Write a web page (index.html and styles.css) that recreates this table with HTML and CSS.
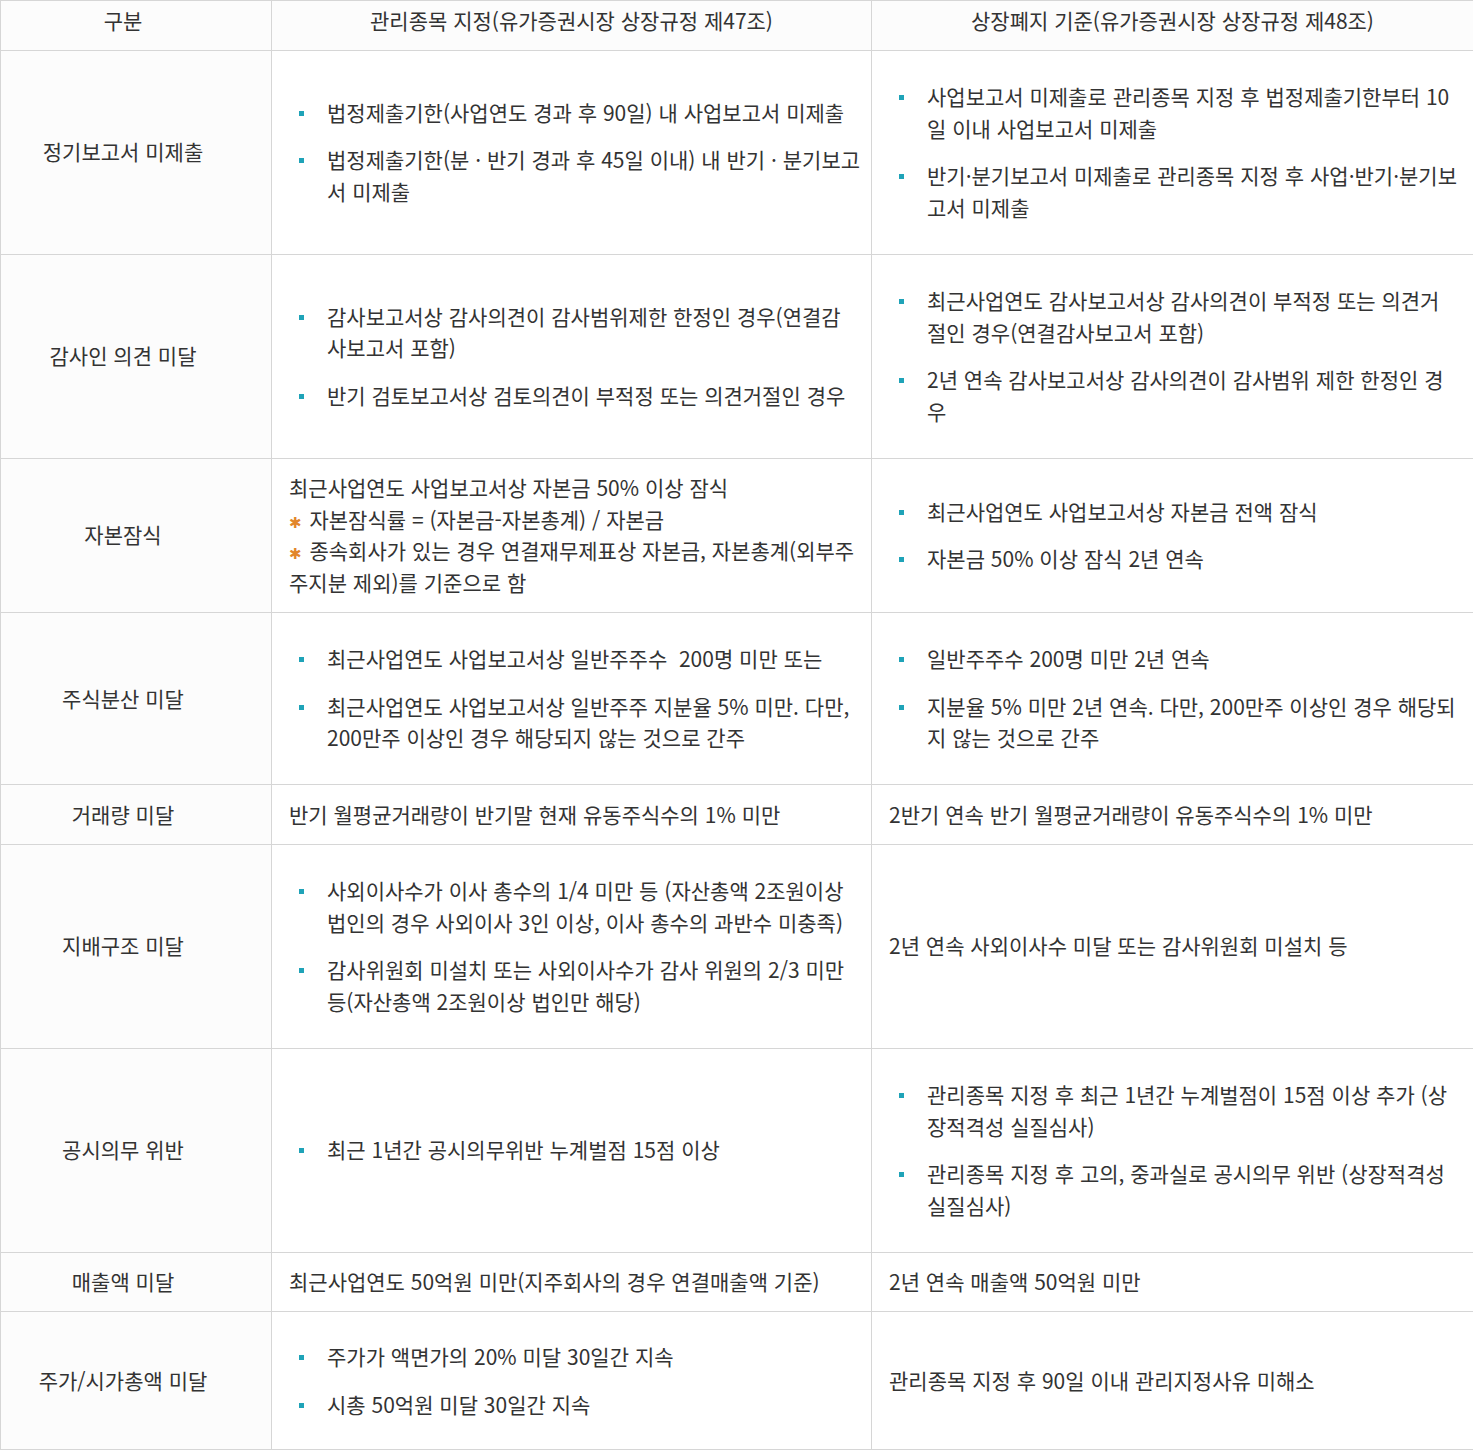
FILE: index.html
```html
<!DOCTYPE html>
<html lang="ko">
<head>
<meta charset="utf-8">
<title>관리종목 지정 및 상장폐지 기준</title>
<link rel="stylesheet" href="styles.css">
</head>
<body>
<table class="rules">
  <colgroup>
    <col class="c1">
    <col class="c2">
    <col class="c3">
  </colgroup>
  <thead>
    <tr>
      <th class="cat">구분</th>
      <th>관리종목 지정(유가증권시장 상장규정 제47조)</th>
      <th>상장폐지 기준(유가증권시장 상장규정 제48조)</th>
    </tr>
  </thead>
  <tbody>
    <tr>
      <td class="cat">정기보고서 미제출</td>
      <td><ul class="dots">
        <li>법정제출기한(사업연도 경과 후 90일) 내 사업보고서 미제출</li>
        <li>법정제출기한(분 · 반기 경과 후 45일 이내) 내 반기 · 분기보고서 미제출</li>
      </ul></td>
      <td><ul class="dots">
        <li>사업보고서 미제출로 관리종목 지정 후 법정제출기한부터 10일 이내 사업보고서 미제출</li>
        <li>반기·분기보고서 미제출로 관리종목 지정 후 사업·반기·분기보고서 미제출</li>
      </ul></td>
    </tr>
    <tr>
      <td class="cat">감사인 의견 미달</td>
      <td><ul class="dots">
        <li>감사보고서상 감사의견이 감사범위제한 한정인 경우(연결감<br>사보고서 포함)</li>
        <li>반기 검토보고서상 검토의견이 부적정 또는 의견거절인 경우</li>
      </ul></td>
      <td><ul class="dots">
        <li>최근사업연도 감사보고서상 감사의견이 부적정 또는 의견거<br>절인 경우(연결감사보고서 포함)</li>
        <li>2년 연속 감사보고서상 감사의견이 감사범위 제한 한정인 경<br>우</li>
      </ul></td>
    </tr>
    <tr>
      <td class="cat">자본잠식</td>
      <td>최근사업연도 사업보고서상 자본금 50% 이상 잠식<br><span class="star">✱</span> 자본잠식률 = (자본금-자본총계) / 자본금<br><span class="star">✱</span> 종속회사가 있는 경우 연결재무제표상 자본금, 자본총계(외부주주지분 제외)를 기준으로 함</td>
      <td><ul class="dots">
        <li>최근사업연도 사업보고서상 자본금 전액 잠식</li>
        <li>자본금 50% 이상 잠식 2년 연속</li>
      </ul></td>
    </tr>
    <tr>
      <td class="cat">주식분산 미달</td>
      <td><ul class="dots">
        <li>최근사업연도 사업보고서상 일반주주수&nbsp; 200명 미만 또는</li>
        <li>최근사업연도 사업보고서상 일반주주 지분율 5% 미만. 다만, 200만주 이상인 경우 해당되지 않는 것으로 간주</li>
      </ul></td>
      <td><ul class="dots">
        <li>일반주주수 200명 미만 2년 연속</li>
        <li>지분율 5% 미만 2년 연속. 다만, 200만주 이상인 경우 해당되지 않는 것으로 간주</li>
      </ul></td>
    </tr>
    <tr>
      <td class="cat">거래량 미달</td>
      <td>반기 월평균거래량이 반기말 현재 유동주식수의 1% 미만</td>
      <td>2반기 연속 반기 월평균거래량이 유동주식수의 1% 미만</td>
    </tr>
    <tr>
      <td class="cat">지배구조 미달</td>
      <td><ul class="dots">
        <li>사외이사수가 이사 총수의 1/4 미만 등 (자산총액 2조원이상 법인의 경우 사외이사 3인 이상, 이사 총수의 과반수 미충족)</li>
        <li>감사위원회 미설치 또는 사외이사수가 감사 위원의 2/3 미만 등(자산총액 2조원이상 법인만 해당)</li>
      </ul></td>
      <td>2년 연속 사외이사수 미달 또는 감사위원회 미설치 등</td>
    </tr>
    <tr>
      <td class="cat">공시의무 위반</td>
      <td><ul class="dots">
        <li>최근 1년간 공시의무위반 누계벌점 15점 이상</li>
      </ul></td>
      <td><ul class="dots">
        <li>관리종목 지정 후 최근 1년간 누계벌점이 15점 이상 추가 (상장적격성 실질심사)</li>
        <li>관리종목 지정 후 고의, 중과실로 공시의무 위반 (상장적격성 실질심사)</li>
      </ul></td>
    </tr>
    <tr>
      <td class="cat">매출액 미달</td>
      <td>최근사업연도 50억원 미만(지주회사의 경우 연결매출액 기준)</td>
      <td>2년 연속 매출액 50억원 미만</td>
    </tr>
    <tr class="last">
      <td class="cat">주가/시가총액 미달</td>
      <td><ul class="dots">
        <li>주가가 액면가의 20% 미달 30일간 지속</li>
        <li>시총 50억원 미달 30일간 지속</li>
      </ul></td>
      <td>관리종목 지정 후 90일 이내 관리지정사유 미해소</td>
    </tr>
  </tbody>
</table>
</body>
</html>
```

FILE: styles.css
```css
html, body {
  margin: 0;
  padding: 0;
  background: #ffffff;
}

body {
  font-family: "Noto Sans CJK KR", "Noto Sans", sans-serif;
  font-size: 21px;
  color: #333333;
}

.rules {
  width: 1473px;
  table-layout: fixed;
  border-collapse: collapse;
  border: 1px solid #d6d6d6;
}

.c1 { width: 271px; }
.c2 { width: 600px; }
.c3 { width: 602px; }

.rules th,
.rules td {
  border: 1px solid #d6d6d6;
  line-height: 31.5px;
  vertical-align: middle;
}

.rules th {
  font-weight: 400;
  text-align: center;
  padding: 4px 17px 13px;
  background: #fcfcfc;
}

.rules td {
  text-align: left;
  padding: 13.5px 8px 13.5px 17px;
}

.rules .cat {
  text-align: center;
  background: #fcfcfc;
  padding-left: 4px;
  padding-right: 30px;
}

.rules .last td {
  padding-top: 12px;
  padding-bottom: 12px;
}

.dots {
  list-style: none;
  margin: 17px 0;
  padding: 0 0 0 38px;
}

.dots li {
  position: relative;
}

.dots li + li {
  margin-top: 16px;
}

.dots li::before {
  content: "";
  position: absolute;
  left: -28px;
  top: 14px;
  width: 5px;
  height: 5px;
  background: #1fa3b8;
}

.star {
  color: #e2862b;
  font-family: "DejaVu Sans", sans-serif;
  font-size: 15px;
  line-height: 1;
  padding-right: 2px;
}
```
